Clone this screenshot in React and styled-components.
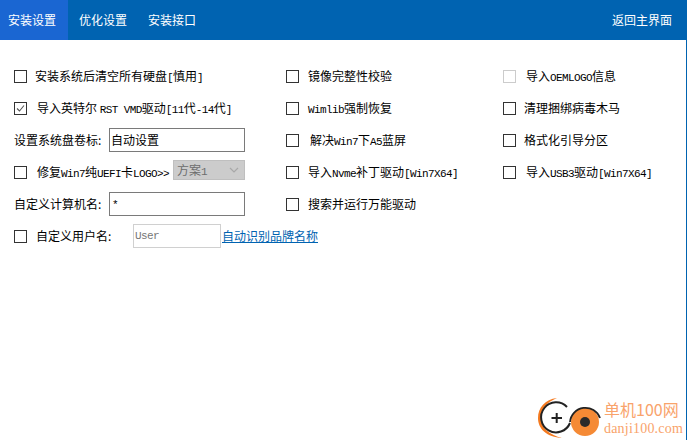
import styled, { createGlobalStyle } from "styled-components";

const GlobalStyle = createGlobalStyle`
  html, body {
    margin: 0;
    padding: 0;
    background: #fff;
  }
  body {
    font-family: "Noto Sans CJK SC", "Liberation Sans", sans-serif;
    font-size: 12px;
    color: #000;
  }
`;

const Page = styled.div`
  position: relative;
  width: 686px;
  height: 440px;
  border-right: 1px solid #0063b1;
  background: #fff;
  overflow: hidden;
`;

const TopBar = styled.div`
  display: flex;
  align-items: center;
  height: 40px;
  background: #0063b1;
  color: #fff;
`;

const Tab = styled.div`
  box-sizing: border-box;
  display: flex;
  align-items: center;
  height: 100%;
  padding: 0 ${(p) => (p.$first ? "12px" : "8px")} 1px ${(p) => (p.$first ? "8px" : "11px")};
  margin-right: ${(p) => (p.$first ? "0" : "2px")};
  background: ${(p) => (p.$active ? "#1a66d2" : "transparent")};
`;

const BackLink = styled.div`
  margin-left: auto;
  padding: 0 14px 1px 0;
`;

const Form = styled.div`
  display: grid;
  grid-template-columns: 272px 217px 1fr;
  grid-auto-rows: 32px;
  padding: 20px 0 0 14px;
  align-items: center;
`;

const Cell = styled.div`
  display: flex;
  align-items: center;
  height: 24px;
  white-space: nowrap;
  grid-column: ${(p) => p.$col};
  grid-row: ${(p) => p.$row};
`;

const Box = styled.span`
  flex: none;
  box-sizing: border-box;
  position: relative;
  width: 13px;
  height: 13px;
  border: 1px solid ${(p) => (p.$disabled ? "#cccccc" : "#333333")};
  margin-right: ${(p) => p.$gap}px;
`;

const Check = styled.svg`
  position: absolute;
  left: 1px;
  top: 1px;
  width: 9px;
  height: 9px;
`;

const Label = styled.span`
  flex: none;
  width: ${(p) => (p.$width ? `${p.$width}px` : "auto")};
  padding-bottom: 2px;
`;

const Latin = styled.span`
  font-family: "Liberation Mono", monospace;
  font-size: 11px;
  letter-spacing: -0.6px;
`;

const TextField = styled.div`
  box-sizing: border-box;
  display: flex;
  align-items: center;
  flex: none;
  width: 136px;
  height: 24px;
  padding: 0 0 2px 1px;
  border: 1px solid #7a7a7a;
`;

const Select = styled.div`
  box-sizing: border-box;
  display: flex;
  align-items: center;
  justify-content: space-between;
  flex: none;
  align-self: flex-start;
  width: 72px;
  height: 20px;
  margin-left: 4px;
  padding: 0 3px 1px;
  background: #cccccc;
  border: 1px solid #bfbfbf;
  color: #6d6d6d;
`;

const Chevron = styled.svg`
  width: 10px;
  height: 6px;
  margin-right: 2px;
`;

const StarField = styled(TextField)`
  padding: 2px 0 0 2px;
`;

const UserField = styled(TextField)`
  width: 88px;
  padding: 0 0 0 1px;
  border-color: #d0d0d0;
  color: #777;
`;

const AutoLink = styled.a`
  flex: none;
  margin-left: 1px;
  padding-bottom: 2px;
  color: #0063b1;
  text-decoration: underline;
`;

const Watermark = styled.div`
  position: absolute;
  left: 537px;
  bottom: 0;
  display: flex;
  gap: 3px;
`;

const WatermarkText = styled.div`
  display: flex;
  flex-direction: column;
  padding-top: 4px;
  color: #f9a36b;
`;

const WatermarkTitle = styled.div`
  font-size: 16px;
  line-height: 18px;
`;

const WatermarkUrl = styled.div`
  margin-top: 3px;
  font-family: "Liberation Serif", serif;
  font-size: 14px;
  line-height: 16px;
  letter-spacing: 0.2px;
`;

function CheckItem({ col, row, gap, checked, disabled, children }) {
  return (
    <Cell $col={col} $row={row}>
      <Box $gap={gap} $disabled={disabled}>
        {checked && (
          <Check viewBox="0 0 9 9">
            <path d="M1 4.5 L3.5 7 L8 1.5" fill="none" stroke="#555" strokeWidth="1.1" />
          </Check>
        )}
      </Box>
      <Label>{children}</Label>
    </Cell>
  );
}

function Logo() {
  return (
    <svg width="64" height="44" viewBox="0 0 64 44">
      <path d="M20 2 C8 3 1 12 1 22 C1 33 10 41 25 42 C13 39 4 32 4 22 C4 13 10 6 20 2 Z" fill="#f47a20" />
      <path d="M30 11 A15 15 0 1 0 33 27" fill="none" stroke="#222" strokeWidth="2" />
      <path d="M14.5 22 H25 M19.7 17 V27" stroke="#222" strokeWidth="2" />
      <circle cx="48" cy="26" r="14" fill="#f58a35" />
      <path d="M33 26 A15.5 15.5 0 0 1 63 22" fill="none" stroke="#222" strokeWidth="1.8" />
      <circle cx="48" cy="26" r="5" fill="#2a2a2a" />
    </svg>
  );
}

export default function App() {
  return (
    <Page>
      <GlobalStyle />
      <TopBar>
        <Tab $active $first>安装设置</Tab>
        <Tab>优化设置</Tab>
        <Tab>安装接口</Tab>
        <BackLink>返回主界面</BackLink>
      </TopBar>
      <Form>
        <CheckItem col={1} row={1} gap={8}>安装系统后清空所有硬盘<Latin>[</Latin>慎用<Latin>]</Latin></CheckItem>
        <CheckItem col={1} row={2} gap={10} checked>
          导入英特尔 <Latin>RST VMD</Latin>驱动<Latin>[11</Latin>代<Latin>-14</Latin>代<Latin>]</Latin>
        </CheckItem>
        <Cell $col={1} $row={3}>
          <Label $width={95}>设置系统盘卷标:</Label>
          <TextField>自动设置</TextField>
        </Cell>
        <Cell $col={1} $row={4}>
          <Box $gap={10} />
          <Label>修复<Latin>Win7</Latin>纯<Latin>UEFI</Latin>卡<Latin>LOGO&gt;&gt;</Latin></Label>
          <Select>
            <span>方案<Latin>1</Latin></span>
            <Chevron viewBox="0 0 10 6">
              <path d="M1 1 L5 5 L9 1" fill="none" stroke="#a8a8a8" strokeWidth="1.2" />
            </Chevron>
          </Select>
        </Cell>
        <Cell $col={1} $row={5}>
          <Label $width={95}>自定义计算机名:</Label>
          <StarField><Latin>*</Latin></StarField>
        </Cell>
        <Cell $col={1} $row={6}>
          <Box $gap={9} />
          <Label $width={97}>自定义用户名:</Label>
          <UserField><Latin>User</Latin></UserField>
          <AutoLink>自动识别品牌名称</AutoLink>
        </Cell>

        <CheckItem col={2} row={1} gap={9}>镜像完整性校验</CheckItem>
        <CheckItem col={2} row={2} gap={9}><Latin>Wimlib</Latin>强制恢复</CheckItem>
        <CheckItem col={2} row={3} gap={11}>解决<Latin>Win7</Latin>下<Latin>A5</Latin>蓝屏</CheckItem>
        <CheckItem col={2} row={4} gap={9}>导入<Latin>Nvme</Latin>补丁驱动<Latin>[Win7X64]</Latin></CheckItem>
        <CheckItem col={2} row={5} gap={9}>搜索并运行万能驱动</CheckItem>

        <CheckItem col={3} row={1} gap={10} disabled>导入<Latin>OEMLOGO</Latin>信息</CheckItem>
        <CheckItem col={3} row={2} gap={8}>清理捆绑病毒木马</CheckItem>
        <CheckItem col={3} row={3} gap={8}>格式化引导分区</CheckItem>
        <CheckItem col={3} row={4} gap={10}>导入<Latin>USB3</Latin>驱动<Latin>[Win7X64]</Latin></CheckItem>
      </Form>
      <Watermark>
        <Logo />
        <WatermarkText>
          <WatermarkTitle>单机100网</WatermarkTitle>
          <WatermarkUrl>danji100.com</WatermarkUrl>
        </WatermarkText>
      </Watermark>
    </Page>
  );
}
